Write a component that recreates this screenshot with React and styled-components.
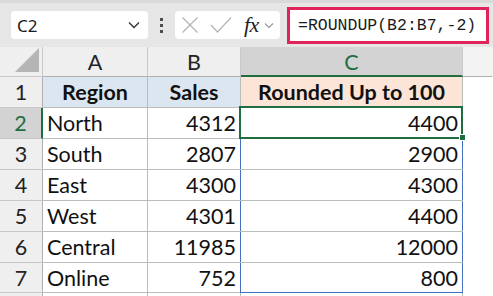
import React from 'react';
import styled, { createGlobalStyle } from 'styled-components';

const GlobalStyle = createGlobalStyle`
  body {
    margin: 0;
    background: #ffffff;
  }
`;

const GREEN = '#1e6e42';
const BLUE = '#4470c4';
const GRID = '#bcbcbc';

const rows = [
  { region: 'North', sales: 4312, rounded: 4400 },
  { region: 'South', sales: 2807, rounded: 2900 },
  { region: 'East', sales: 4300, rounded: 4300 },
  { region: 'West', sales: 4301, rounded: 4400 },
  { region: 'Central', sales: 11985, rounded: 12000 },
  { region: 'Online', sales: 752, rounded: 800 },
];

export default function App() {
  return (
    <Page>
      <GlobalStyle />
      <Toolbar>
        <NameBox>
          <span>C2</span>
          <Chevron width="12" height="8" viewBox="0 0 12 8">
            <polyline points="1,1.5 6,6.5 11,1.5" />
          </Chevron>
        </NameBox>
        <Dots>
          <i />
          <i />
          <i />
        </Dots>
        <FormulaTools>
          <ToolIcon width="18" height="18" viewBox="0 0 18 18">
            <line x1="1.5" y1="1.5" x2="16.5" y2="16.5" />
            <line x1="16.5" y1="1.5" x2="1.5" y2="16.5" />
          </ToolIcon>
          <ToolIcon width="22" height="18" viewBox="0 0 22 18">
            <polyline points="1,9 7.5,16 21,1.5" />
          </ToolIcon>
          <Fx>fx</Fx>
          <SmallChevron width="10" height="7" viewBox="0 0 10 7">
            <polyline points="1,1.5 5,5.5 9,1.5" />
          </SmallChevron>
        </FormulaTools>
        <FormulaBox>=ROUNDUP(B2:B7,-2)</FormulaBox>
      </Toolbar>

      <Sheet>
        <Corner>
          <Triangle width="24" height="24" viewBox="0 0 24 24">
            <polygon points="24,0 24,24 0,24" />
          </Triangle>
        </Corner>
        <ColHead>A</ColHead>
        <ColHead>B</ColHead>
        <ColHead $active>C</ColHead>
        <ColHead $blank />

        <RowHead>1</RowHead>
        <TitleCell $bg="#dce6f1">Region</TitleCell>
        <TitleCell $bg="#dce6f1">Sales</TitleCell>
        <TitleCell $bg="#fce4d6">Rounded Up to 100</TitleCell>
        <Cell $blank />

        {rows.map((r, i) => {
          const n = i + 2;
          return (
            <React.Fragment key={r.region}>
              <RowHead $active={n === 2}>{n}</RowHead>
              <Cell>{r.region}</Cell>
              <Cell $num>{r.sales}</Cell>
              <Cell $num $selected={n === 2} $ranged={n > 2} $last={n === 7}>
                {r.rounded}
              </Cell>
              <Cell $blank />
            </React.Fragment>
          );
        })}

        <RowHead $tail />
        <Cell $tail />
        <Cell $tail />
        <Cell $tail />
        <Cell $tail $blank />
      </Sheet>
    </Page>
  );
}

const Page = styled.div`
  width: 493px;
  height: 296px;
  overflow: hidden;
  background: #ffffff;
  font-family: Lato, 'Open Sans', sans-serif;
`;

const Toolbar = styled.div`
  height: 47px;
  box-sizing: border-box;
  background: #e6e6e6;
  border-top: 3px solid #dadada;
  display: flex;
  align-items: center;
`;

const NameBox = styled.div`
  margin-left: 11px;
  width: 137px;
  height: 28px;
  box-sizing: border-box;
  background: #ffffff;
  border-radius: 4px;
  display: flex;
  align-items: center;
  justify-content: space-between;
  padding: 0 8px 0 6px;
  font-family: 'Noto Sans', sans-serif;
  font-size: 17px;
  color: #1a1a1a;
`;

const Chevron = styled.svg`
  fill: none;
  stroke: #333333;
  stroke-width: 1.3;
`;

const Dots = styled.div`
  width: 27px;
  display: flex;
  flex-direction: column;
  align-items: center;
  gap: 3px;

  i {
    display: block;
    width: 3px;
    height: 3px;
    background: #4d4d4d;
  }
`;

const FormulaTools = styled.div`
  width: 105px;
  height: 28px;
  box-sizing: border-box;
  background: #ffffff;
  border-radius: 4px;
  display: flex;
  align-items: center;
  padding-left: 6px;
`;

const ToolIcon = styled.svg`
  fill: none;
  stroke: #b4b4b4;
  stroke-width: 1.2;
  margin-right: 11px;
`;

const Fx = styled.span`
  font-family: 'Liberation Serif', serif;
  font-style: italic;
  font-size: 22px;
  color: #222222;
  margin-left: 1px;
  letter-spacing: -0.5px;
`;

const SmallChevron = styled.svg`
  fill: none;
  stroke: #9a9a9a;
  stroke-width: 1.2;
  margin-left: 5px;
`;

const FormulaBox = styled.div`
  margin-left: 7px;
  width: 202px;
  height: 37px;
  box-sizing: border-box;
  border: 3px solid #e0245a;
  background: #ffffff;
  display: flex;
  align-items: center;
  padding-left: 8px;
  font-family: 'Liberation Mono', monospace;
  font-size: 16.5px;
  color: #1a1a1a;
  white-space: nowrap;
`;

const Sheet = styled.div`
  display: grid;
  grid-template-columns: 43px 105px 93px 222px 1fr;
  grid-template-rows: 30px 31px 31px 31px 31px 31px 31px 30px 10px;
  font-size: 21.5px;
  color: #111111;
`;

const baseCell = `
  box-sizing: border-box;
  border-right: 1px solid ${GRID};
  border-bottom: 1px solid ${GRID};
  display: flex;
  align-items: center;
  white-space: nowrap;
  position: relative;
`;

const Corner = styled.div`
  ${baseCell}
  background: #efefef;
  border-color: #c8c8c8;
  justify-content: flex-end;
  align-items: flex-end;
  padding: 0 3px 4px 0;
`;

const Triangle = styled.svg`
  fill: #b5b5b5;
  display: block;
`;

const ColHead = styled.div`
  ${baseCell}
  justify-content: center;
  background: ${(p) => (p.$active ? '#d3d3d3' : p.$blank ? '#f3f3f3' : '#efefef')};
  border-right-color: ${(p) => (p.$blank ? 'transparent' : '#c8c8c8')};
  border-bottom: ${(p) => (p.$active ? `2px solid ${GREEN}` : '1px solid #b0b0b0')};
  color: ${(p) => (p.$active ? GREEN : '#222222')};
  padding-top: ${(p) => (p.$active ? '2px' : '0')};
`;

const RowHead = styled.div`
  ${baseCell}
  justify-content: center;
  background: ${(p) => (p.$active ? '#d3d3d3' : '#efefef')};
  border-right: ${(p) => (p.$active ? `2px solid ${GREEN}` : '1px solid #b0b0b0')};
  border-bottom-color: ${(p) => (p.$tail ? 'transparent' : '#c8c8c8')};
  color: ${(p) => (p.$active ? GREEN : '#222222')};
`;

const TitleCell = styled.div`
  ${baseCell}
  justify-content: center;
  background: ${(p) => p.$bg};
  font-weight: 700;
`;

const Cell = styled.div`
  ${baseCell}
  justify-content: ${(p) => (p.$num ? 'flex-end' : 'flex-start')};
  padding: 0 4px;
  background: #ffffff;
  border-right-color: ${(p) => (p.$blank ? 'transparent' : GRID)};
  border-bottom-color: ${(p) => (p.$tail || p.$blank ? 'transparent' : GRID)};

  ${(p) =>
    p.$selected &&
    `
    &::after {
      content: '';
      position: absolute;
      left: -2px;
      top: -2px;
      right: -1px;
      bottom: -1px;
      border: 2px solid ${GREEN};
      pointer-events: none;
    }
    &::before {
      content: '';
      position: absolute;
      right: -4px;
      bottom: -3px;
      width: 5px;
      height: 5px;
      background: ${GREEN};
      border: 1px solid #ffffff;
      z-index: 2;
    }
  `}

  ${(p) =>
    p.$ranged &&
    `
    &::after {
      content: '';
      position: absolute;
      left: -1px;
      top: 0;
      right: -1px;
      bottom: ${p.$last ? '-1px' : '0'};
      border-left: 1px solid ${BLUE};
      border-right: 1px solid ${BLUE};
      border-bottom: ${p.$last ? `1px solid ${BLUE}` : '0'};
      pointer-events: none;
    }
  `}
`;
